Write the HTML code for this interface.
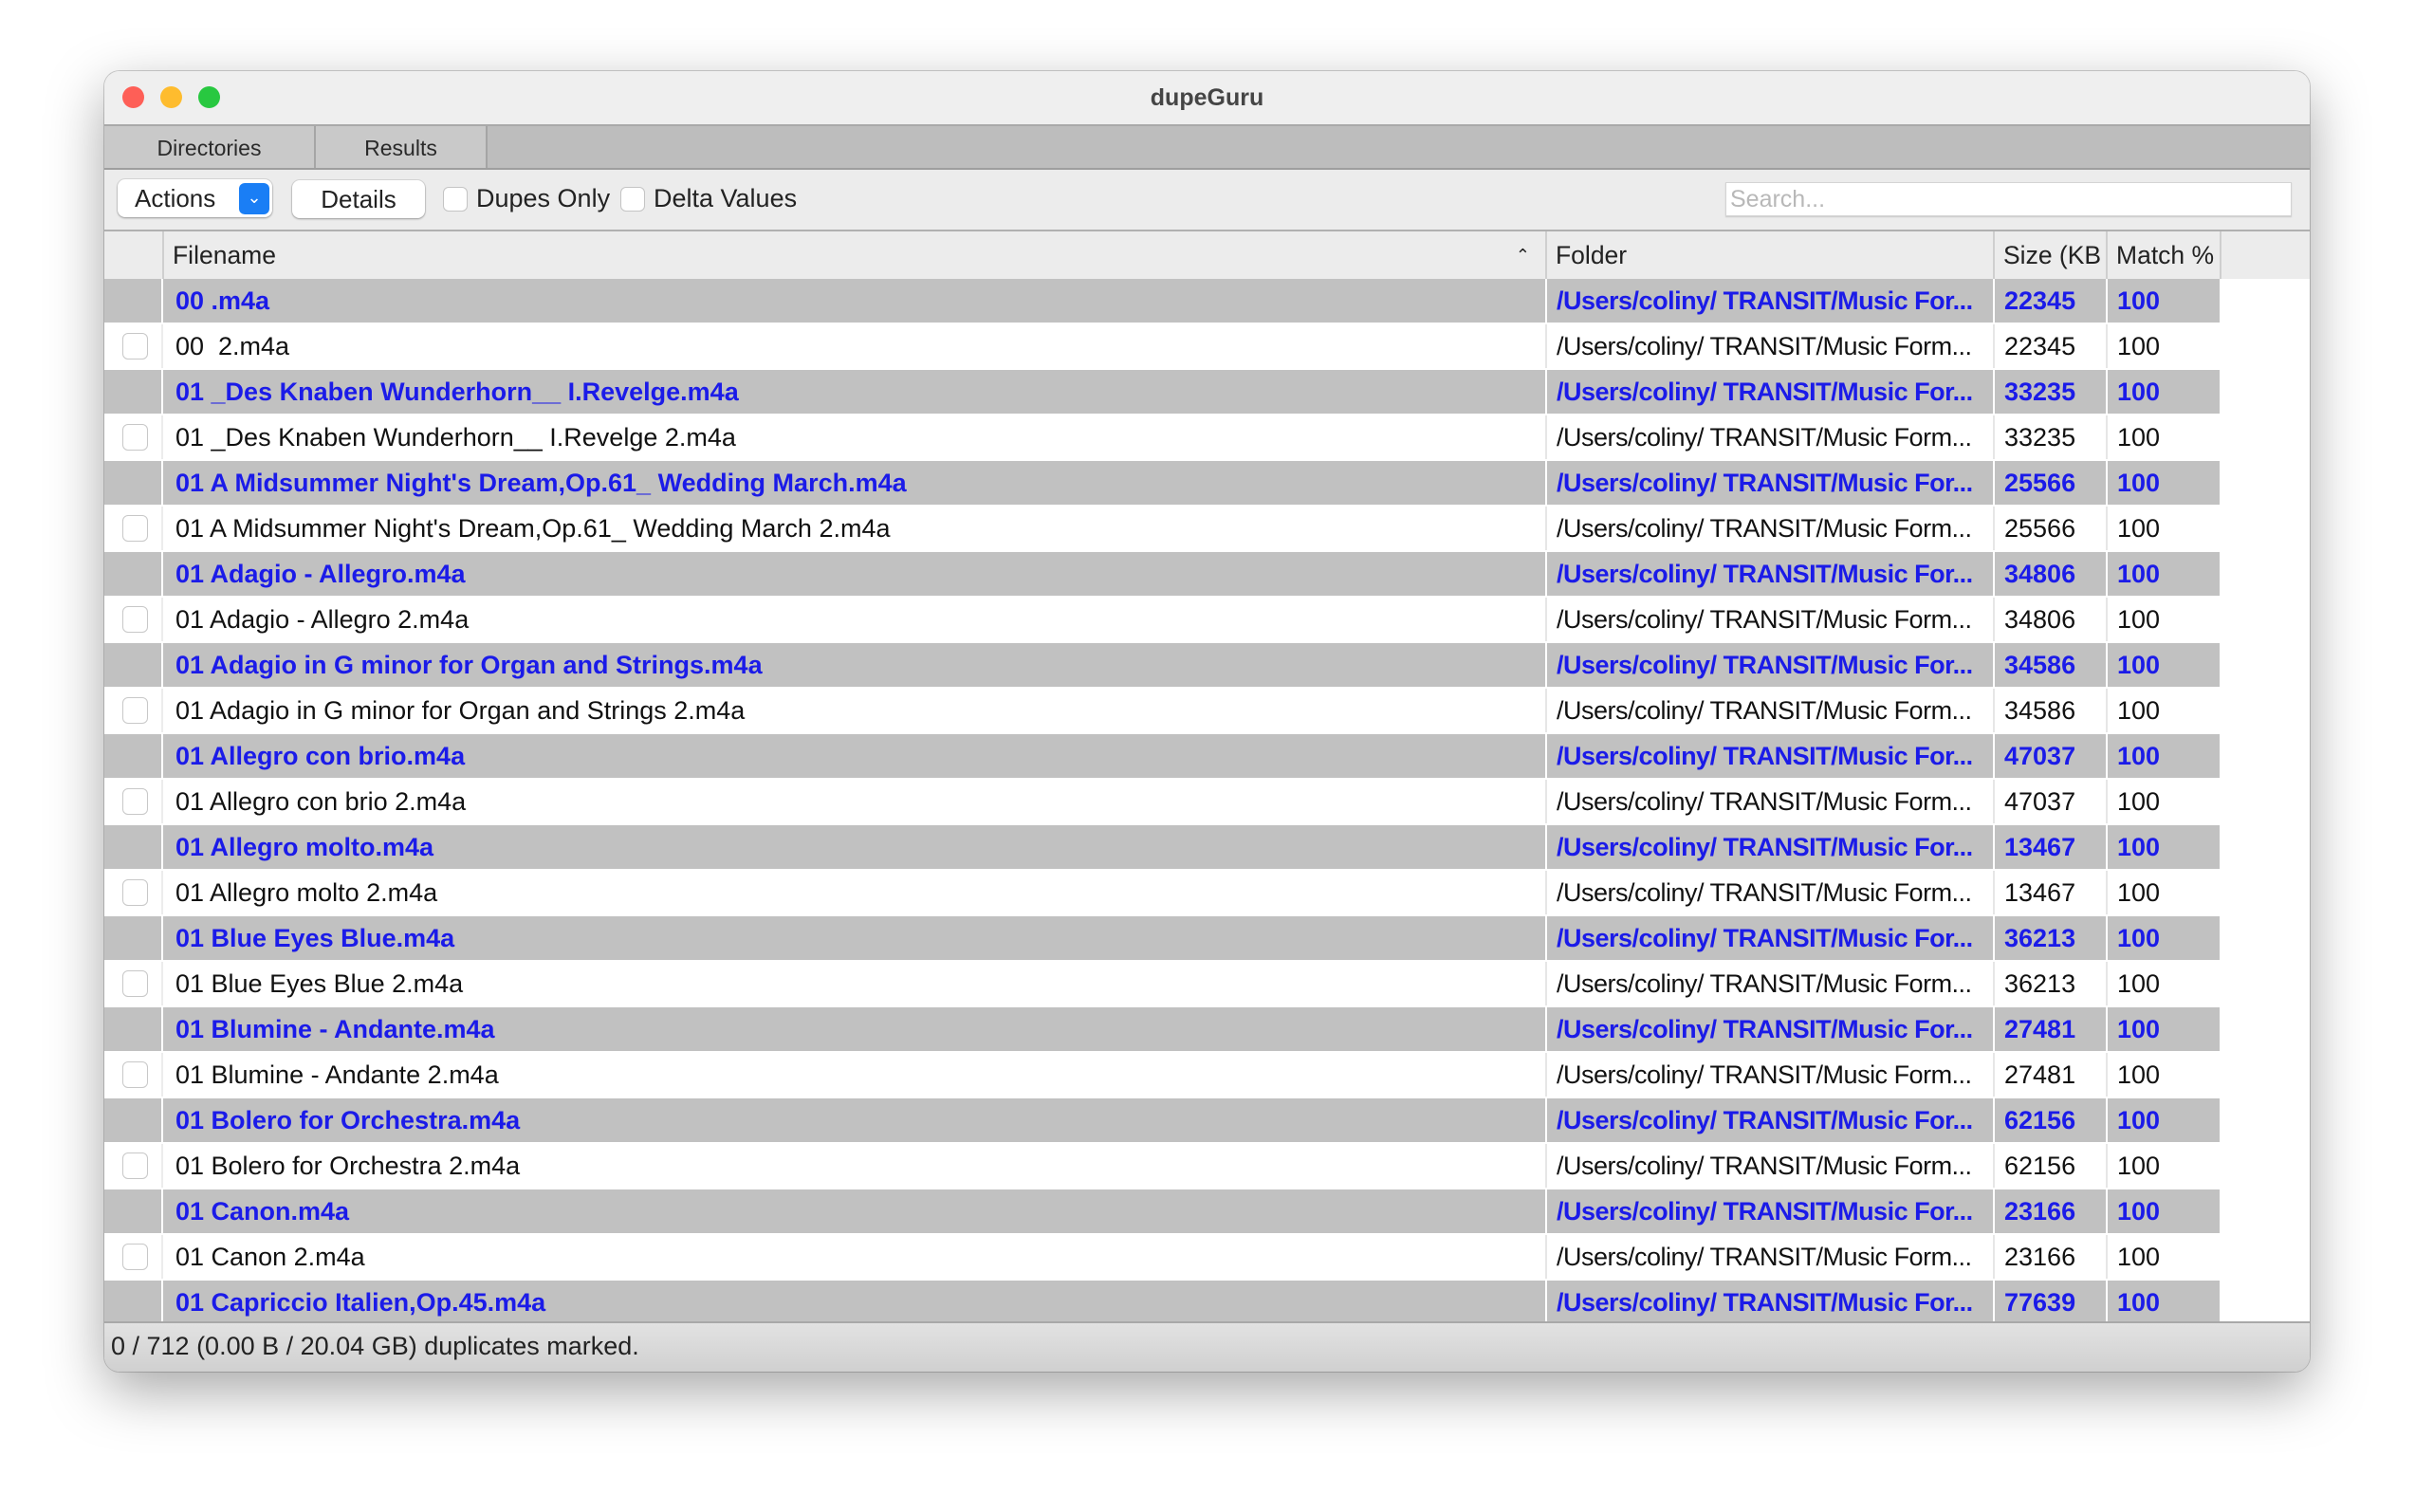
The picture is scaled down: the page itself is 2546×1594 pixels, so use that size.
<!DOCTYPE html>
<html><head><meta charset="utf-8"><style>
*{margin:0;padding:0;box-sizing:border-box}
body{width:2546px;height:1594px;background:#fff;font-family:"Liberation Sans",sans-serif;position:relative;overflow:hidden}
.win{position:absolute;left:110px;top:75px;width:2325px;height:1371px;border-radius:16px;background:#ececec;box-shadow:0 20px 60px rgba(0,0,0,.35),0 0 0 1px rgba(0,0,0,.18);overflow:hidden}
.title{position:absolute;left:0;top:0;width:100%;height:58px;background:#efefef;border-bottom:2px solid #a9a9a9}
.title span{position:absolute;left:0;right:0;text-align:center;top:14px;font-weight:bold;font-size:25px;color:#454545}
.tl{position:absolute;top:16px;width:23px;height:23px;border-radius:50%}
.tabs{position:absolute;top:58px;left:0;width:100%;height:46px;background:#bdbdbd;border-bottom:2px solid #9e9e9e}
.tab{position:absolute;top:0;height:44px;background:#c9c9c9;font-size:23px;color:#2a2a2a;text-align:center;line-height:46px;border-right:2px solid #a5a5a5}
.tb{position:absolute;top:104px;left:0;width:100%;height:65px;background:#ececec;border-bottom:2px solid #b0b0b0}
.btn{position:absolute;background:#fff;border-radius:8px;box-shadow:0 1px 2px rgba(0,0,0,.3),0 0 0 1px rgba(0,0,0,.08);font-size:26px;color:#222;line-height:40px}
.cb{position:absolute;width:26px;height:26px;border-radius:6px;background:#fff;border:1px solid #c4c4c4}
.lbl{position:absolute;font-size:27px;color:#222}
.hdr{position:absolute;top:169px;left:0;width:100%;height:50px;background:#ececec}
.hdr div{position:absolute;top:0;height:50px;line-height:50px;font-size:26.5px;color:#222;border-left:2px solid #cfcfcf;padding-left:9px}
.rows{position:absolute;top:219px;left:0;width:2230px}
.r{position:relative;height:48px;border-bottom:2px solid #fff;display:flex;font-size:27px;line-height:46px}
.r.d{background:#c1c1c1;color:#1b1be8;font-weight:bold}
.r.n{background:#fff;color:#111}
.r div{white-space:nowrap;overflow:hidden;padding-left:10px}
.r .c1{padding-left:13px}
.c0{width:62px;border-right:2px solid #fff;position:relative;padding:0!important}
.n .c0{border-right:2px solid #ececec}
.c1{width:1457px}.c2{width:472px;border-left:2px solid #fff;letter-spacing:-0.5px}.c3{width:119px;border-left:2px solid #fff}.c4{width:120px;border-left:2px solid #fff}
.n .c2,.n .c3,.n .c4{border-left-color:#e6e6e6}
.rc{position:absolute;left:19px;top:9px;width:27px;height:28px;border-radius:6px;border:1px solid #c8c8c8;background:#fff}
.st{position:absolute;top:1318px;left:0;width:100%;height:53px;background:linear-gradient(#e2e2e2,#d0d0d0);border-top:2px solid #a9a9a9;font-size:27px;color:#222;padding-left:7px;line-height:48px}
</style></head><body>
<div class="win">
<div class="title"><div class="tl" style="left:19px;background:#fe5f57"></div><div class="tl" style="left:59px;background:#febc2e"></div><div class="tl" style="left:99px;background:#28c840"></div><span>dupeGuru</span></div>
<div class="tabs"><div class="tab" style="left:0;width:223px">Directories</div><div class="tab" style="left:223px;width:181px">Results</div></div>
<div class="tb">
<div class="btn" style="left:14px;top:10px;width:163px;height:40px;padding-left:18px">Actions<span style="position:absolute;left:128px;top:4px;width:32px;height:33px;border-radius:6px;background:#1a7ef5;color:#fff;font-size:18px;line-height:30px;text-align:center">&#8964;</span></div>
<div class="btn" style="left:198px;top:11px;width:140px;height:40px;text-align:center">Details</div>
<div class="cb" style="left:357px;top:18px"></div><div class="lbl" style="left:392px;top:15px">Dupes Only</div>
<div class="cb" style="left:544px;top:18px"></div><div class="lbl" style="left:579px;top:15px">Delta Values</div>
<div style="position:absolute;left:1709px;top:13px;width:597px;height:36px;background:#fff;border:1px solid #d4d4d4;box-shadow:0 1px 1px rgba(0,0,0,.15);font-size:25px;color:#b8b8b8;padding-left:4px;line-height:34px">Search...</div>
</div>
<div class="hdr">
<div style="left:61px;width:1458px">Filename<span style="position:absolute;right:16px;font-size:18px">&#8963;</span></div>
<div style="left:1519px;width:472px">Folder</div>
<div style="left:1991px;width:119px">Size (KB</div>
<div style="left:2110px;width:120px">Match %</div>
<div style="left:2230px;width:1px;padding:0"></div>
</div>
<div class="rows">
<div class="r d"><div class="c0"></div><div class="c1">00 .m4a</div><div class="c2">/Users/coliny/ TRANSIT/Music For...</div><div class="c3">22345</div><div class="c4">100</div></div>
<div class="r n"><div class="c0"><span class="rc"></span></div><div class="c1">00&nbsp; 2.m4a</div><div class="c2">/Users/coliny/ TRANSIT/Music Form...</div><div class="c3">22345</div><div class="c4">100</div></div>
<div class="r d"><div class="c0"></div><div class="c1">01 _Des Knaben Wunderhorn__ I.Revelge.m4a</div><div class="c2">/Users/coliny/ TRANSIT/Music For...</div><div class="c3">33235</div><div class="c4">100</div></div>
<div class="r n"><div class="c0"><span class="rc"></span></div><div class="c1">01 _Des Knaben Wunderhorn__ I.Revelge 2.m4a</div><div class="c2">/Users/coliny/ TRANSIT/Music Form...</div><div class="c3">33235</div><div class="c4">100</div></div>
<div class="r d"><div class="c0"></div><div class="c1">01 A Midsummer Night's Dream,Op.61_ Wedding March.m4a</div><div class="c2">/Users/coliny/ TRANSIT/Music For...</div><div class="c3">25566</div><div class="c4">100</div></div>
<div class="r n"><div class="c0"><span class="rc"></span></div><div class="c1">01 A Midsummer Night's Dream,Op.61_ Wedding March 2.m4a</div><div class="c2">/Users/coliny/ TRANSIT/Music Form...</div><div class="c3">25566</div><div class="c4">100</div></div>
<div class="r d"><div class="c0"></div><div class="c1">01 Adagio - Allegro.m4a</div><div class="c2">/Users/coliny/ TRANSIT/Music For...</div><div class="c3">34806</div><div class="c4">100</div></div>
<div class="r n"><div class="c0"><span class="rc"></span></div><div class="c1">01 Adagio - Allegro 2.m4a</div><div class="c2">/Users/coliny/ TRANSIT/Music Form...</div><div class="c3">34806</div><div class="c4">100</div></div>
<div class="r d"><div class="c0"></div><div class="c1">01 Adagio in G minor for Organ and Strings.m4a</div><div class="c2">/Users/coliny/ TRANSIT/Music For...</div><div class="c3">34586</div><div class="c4">100</div></div>
<div class="r n"><div class="c0"><span class="rc"></span></div><div class="c1">01 Adagio in G minor for Organ and Strings 2.m4a</div><div class="c2">/Users/coliny/ TRANSIT/Music Form...</div><div class="c3">34586</div><div class="c4">100</div></div>
<div class="r d"><div class="c0"></div><div class="c1">01 Allegro con brio.m4a</div><div class="c2">/Users/coliny/ TRANSIT/Music For...</div><div class="c3">47037</div><div class="c4">100</div></div>
<div class="r n"><div class="c0"><span class="rc"></span></div><div class="c1">01 Allegro con brio 2.m4a</div><div class="c2">/Users/coliny/ TRANSIT/Music Form...</div><div class="c3">47037</div><div class="c4">100</div></div>
<div class="r d"><div class="c0"></div><div class="c1">01 Allegro molto.m4a</div><div class="c2">/Users/coliny/ TRANSIT/Music For...</div><div class="c3">13467</div><div class="c4">100</div></div>
<div class="r n"><div class="c0"><span class="rc"></span></div><div class="c1">01 Allegro molto 2.m4a</div><div class="c2">/Users/coliny/ TRANSIT/Music Form...</div><div class="c3">13467</div><div class="c4">100</div></div>
<div class="r d"><div class="c0"></div><div class="c1">01 Blue Eyes Blue.m4a</div><div class="c2">/Users/coliny/ TRANSIT/Music For...</div><div class="c3">36213</div><div class="c4">100</div></div>
<div class="r n"><div class="c0"><span class="rc"></span></div><div class="c1">01 Blue Eyes Blue 2.m4a</div><div class="c2">/Users/coliny/ TRANSIT/Music Form...</div><div class="c3">36213</div><div class="c4">100</div></div>
<div class="r d"><div class="c0"></div><div class="c1">01 Blumine - Andante.m4a</div><div class="c2">/Users/coliny/ TRANSIT/Music For...</div><div class="c3">27481</div><div class="c4">100</div></div>
<div class="r n"><div class="c0"><span class="rc"></span></div><div class="c1">01 Blumine - Andante 2.m4a</div><div class="c2">/Users/coliny/ TRANSIT/Music Form...</div><div class="c3">27481</div><div class="c4">100</div></div>
<div class="r d"><div class="c0"></div><div class="c1">01 Bolero for Orchestra.m4a</div><div class="c2">/Users/coliny/ TRANSIT/Music For...</div><div class="c3">62156</div><div class="c4">100</div></div>
<div class="r n"><div class="c0"><span class="rc"></span></div><div class="c1">01 Bolero for Orchestra 2.m4a</div><div class="c2">/Users/coliny/ TRANSIT/Music Form...</div><div class="c3">62156</div><div class="c4">100</div></div>
<div class="r d"><div class="c0"></div><div class="c1">01 Canon.m4a</div><div class="c2">/Users/coliny/ TRANSIT/Music For...</div><div class="c3">23166</div><div class="c4">100</div></div>
<div class="r n"><div class="c0"><span class="rc"></span></div><div class="c1">01 Canon 2.m4a</div><div class="c2">/Users/coliny/ TRANSIT/Music Form...</div><div class="c3">23166</div><div class="c4">100</div></div>
<div class="r d"><div class="c0"></div><div class="c1">01 Capriccio Italien,Op.45.m4a</div><div class="c2">/Users/coliny/ TRANSIT/Music For...</div><div class="c3">77639</div><div class="c4">100</div></div>
</div>
<div style="position:absolute;left:2230px;top:219px;width:95px;height:1099px;background:#fff"></div>
<div class="st">0 / 712 (0.00 B / 20.04 GB) duplicates marked.</div>
</div>
</body></html>
